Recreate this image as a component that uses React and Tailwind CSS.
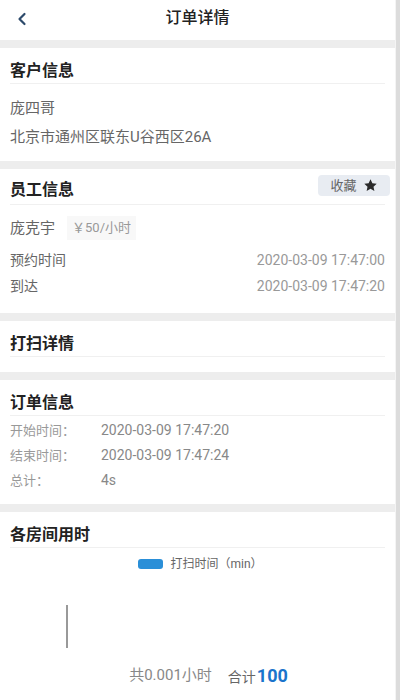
import React from 'react';

const FONT = { fontFamily: 'Roboto, "Noto Sans CJK SC", sans-serif' };

const Title = ({ children, right }) => (
  <div className="h-[36px] pt-[13px] pb-[3px] border-b border-[#f0f0f0] flex items-start justify-between">
    <span className="text-[16px] leading-[20px] font-bold text-[#222]">{children}</span>
    {right}
  </div>
);

const Gap = () => <div className="h-[8px] bg-[#ededed]" />;

const App = () => {
  return (
    <div className="w-[400px] h-[700px] flex overflow-hidden bg-white" style={FONT}>
      <div className="w-[395px] flex flex-col">
        {/* Header */}
        <div className="h-[40px] flex items-center relative bg-white">
          <svg className="absolute left-[16px] top-[12px]" width="12" height="14" viewBox="0 0 12 14" fill="none">
            <path d="M8.5 2 L3.5 7 L8.5 12" stroke="#2d4a6b" strokeWidth="2.2" strokeLinecap="round" strokeLinejoin="round" />
          </svg>
          <div className="flex-1 text-center text-[16px] font-medium text-[#222] -mt-[4px]">订单详情</div>
        </div>
        <Gap />

        {/* 客户信息 */}
        <div className="px-[10px] pb-[9px]">
          <Title>客户信息</Title>
          <div className="pt-[10px] text-[15px] text-[#666]">
            <div className="h-[29px] flex items-center">庞四哥</div>
            <div className="h-[29px] flex items-center">北京市通州区联东U谷西区26A</div>
          </div>
        </div>
        <Gap />

        {/* 员工信息 */}
        <div className="px-[10px] pb-[14px]">
          <div className="h-[36px] border-b border-[#f0f0f0] flex items-center justify-between">
            <span className="text-[16px] leading-[20px] font-bold text-[#222] mt-[6px]">员工信息</span>
            <div className="mt-[-2px] -mr-[5px] h-[21px] w-[72px] rounded-[4px] bg-[#e8ecf2] flex items-center justify-center gap-[6px] text-[13px] text-[#666]">
              <span>收藏</span>
              <svg width="15" height="15" viewBox="0 0 24 24" fill="#2b2b2b">
                <path d="M12 2l3 6.3 6.9.8-5.1 4.7 1.4 6.9L12 17.3l-6.2 3.4 1.4-6.9L2.1 9.1 9 8.3z" />
              </svg>
            </div>
          </div>
          <div className="pt-[8px] text-[14px] text-[#666]">
            <div className="h-[30px] flex items-center gap-[12px]">
              <span className="text-[15px]">庞克宇</span>
              <span className="px-[5px] h-[24px] flex items-center bg-[#f8f8f8] text-[13px] text-[#999]">￥50/小时</span>
            </div>
            <div className="h-[26px] mt-[4px] flex items-center justify-between">
              <span>预约时间</span>
              <span className="text-[14px] text-[#999]">2020-03-09 17:47:00</span>
            </div>
            <div className="h-[26px] flex items-center justify-between">
              <span>到达</span>
              <span className="text-[14px] text-[#999]">2020-03-09 17:47:20</span>
            </div>
          </div>
        </div>
        <Gap />

        {/* 打扫详情 */}
        <div className="px-[10px] pb-[15px]">
          <Title>打扫详情</Title>
        </div>
        <Gap />

        {/* 订单信息 */}
        <div className="px-[10px] pb-[11px]">
          <Title>订单信息</Title>
          <div className="pt-[2px] text-[13px] text-[#999]">
            {[
              ['开始时间：', '2020-03-09 17:47:20'],
              ['结束时间：', '2020-03-09 17:47:24'],
              ['总计：', '4s'],
            ].map(([k, v]) => (
              <div key={k} className="h-[25px] flex items-center">
                <span className="w-[91px]">{k}</span>
                <span className="text-[14px] text-[#888]">{v}</span>
              </div>
            ))}
          </div>
        </div>
        <Gap />

        {/* 各房间用时 */}
        <div className="px-[10px] flex-1 flex flex-col">
          <Title>各房间用时</Title>
          <div className="flex items-center justify-center gap-[7px] mt-[9px] h-[13px] ml-[6px]">
            <span className="w-[25px] h-[10px] rounded-[3px] bg-[#2a8fd8]" />
            <span className="text-[12px] text-[#666]">打扫时间（min）</span>
          </div>
          <div className="flex-1 relative">
            <div className="absolute left-[56px] top-[35px] w-[2px] h-[43px] bg-[#999]" />
          </div>
        </div>

        {/* Footer */}
        <div className="h-[50px] shrink-0 flex items-center justify-center gap-[16px] bg-white pl-[22px]">
          <span className="text-[15px] text-[#888]">共0.001小时</span>
          <span className="flex items-baseline text-[14px] text-[#666]">
            合计<span className="text-[18px] font-bold text-[#1a74cc] ml-[1px]">100</span>
          </span>
        </div>
      </div>
      <div className="w-[5px] bg-[#dcdcdc] border-l border-[#f4f4f4]" />
    </div>
  );
};

export default App;
